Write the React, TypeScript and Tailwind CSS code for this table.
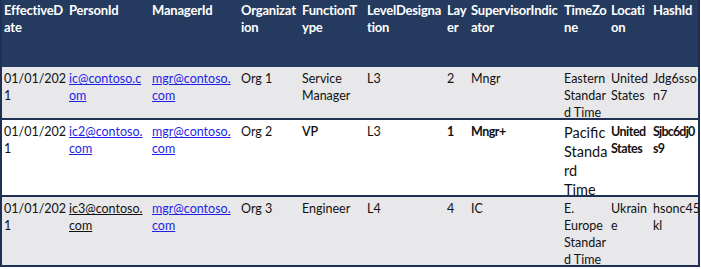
const cols = "grid-cols-[65px_83px_89px_61px_65px_80px_24px_93px_47px_42px_50px]";

type Cell = { lines: string[]; cls?: string };

const headers = [
  ["EffectiveD", "ate"],
  ["PersonId"],
  ["ManagerId"],
  ["Organizat", "ion"],
  ["FunctionT", "ype"],
  ["LevelDesigna", "tion"],
  ["Lay", "er"],
  ["SupervisorIndic", "ator"],
  ["TimeZo", "ne"],
  ["Locati", "on"],
  ["HashId"],
];

const link = "text-[#1f1fe6] underline";
const strong = "font-bold tracking-[-0.5px]";

const rows: { bg: string; h: string; cells: Cell[] }[] = [
  {
    bg: "bg-[#e8e8ea]",
    h: "h-[51px]",
    cells: [
      { lines: ["01/01/202", "1"] },
      { lines: ["ic@contoso.c", "om"], cls: link },
      { lines: ["mgr@contoso.", "com"], cls: link },
      { lines: ["Org 1"] },
      { lines: ["Service", "Manager"] },
      { lines: ["L3"] },
      { lines: ["2"] },
      { lines: ["Mngr"] },
      { lines: ["Eastern", "Standar", "d Time"] },
      { lines: ["United", "States"] },
      { lines: ["Jdg6sso", "n7"] },
    ],
  },
  {
    bg: "bg-white",
    h: "h-[77px]",
    cells: [
      { lines: ["01/01/202", "1"] },
      { lines: ["ic2@contoso.", "com"], cls: link },
      { lines: ["mgr@contoso.", "com"], cls: link },
      { lines: ["Org 2"] },
      { lines: ["VP"], cls: "font-semibold" },
      { lines: ["L3"] },
      { lines: ["1"], cls: "font-bold" },
      { lines: ["Mngr+"], cls: strong },
      { lines: ["Pacific", "Standa", "rd", "Time"], cls: "text-[14.5px] leading-[19px]" },
      { lines: ["United", "States"], cls: strong },
      { lines: ["Sjbc6dj0", "s9"], cls: "font-bold tracking-[-0.8px]" },
    ],
  },
  {
    bg: "bg-[#e8e8ea]",
    h: "h-[70px]",
    cells: [
      { lines: ["01/01/202", "1"] },
      { lines: ["ic3@contoso.", "com"], cls: "underline" },
      { lines: ["mgr@contoso.", "com"], cls: link },
      { lines: ["Org 3"] },
      { lines: ["Engineer"] },
      { lines: ["L4"] },
      { lines: ["4"] },
      { lines: ["IC"] },
      { lines: ["E.", "Europe", "Standar", "d Time"] },
      { lines: ["Ukrain", "e"] },
      { lines: ["hsonc45", "kl"] },
    ],
  },
];

export default function App() {
  return (
    <div className="w-[701px] h-[269px] bg-white font-['Lato','Liberation_Sans',sans-serif] text-[12.5px] leading-[17px] text-[#111]">
      <div className="w-[700px] border-l-2 border-r-2 border-b-2 border-[#1e3154]">
        <div className={`grid ${cols} h-[67px] bg-[#243a5e] text-white font-bold text-[13px] tracking-[-0.2px]`}>
          {headers.map((h, i) => (
            <div key={i} className="pl-[2px] pt-[2px] whitespace-nowrap">
              {h.map((l, j) => (
                <div key={j}>{l}</div>
              ))}
            </div>
          ))}
        </div>
        {rows.map((r, i) => (
          <div
            key={i}
            className={`grid ${cols} ${r.h} ${r.bg} ${i > 0 ? "border-t-2 border-[#1e3154]" : ""}`}
          >
            {r.cells.map((c, j) => (
              <div key={j} className={`pl-[2px] pt-[3px] whitespace-nowrap ${c.cls ?? ""}`}>
                {c.lines.map((l, k) => (
                  <div key={k}>
                    <span>{l}</span>
                  </div>
                ))}
              </div>
            ))}
          </div>
        ))}
      </div>
    </div>
  );
}
